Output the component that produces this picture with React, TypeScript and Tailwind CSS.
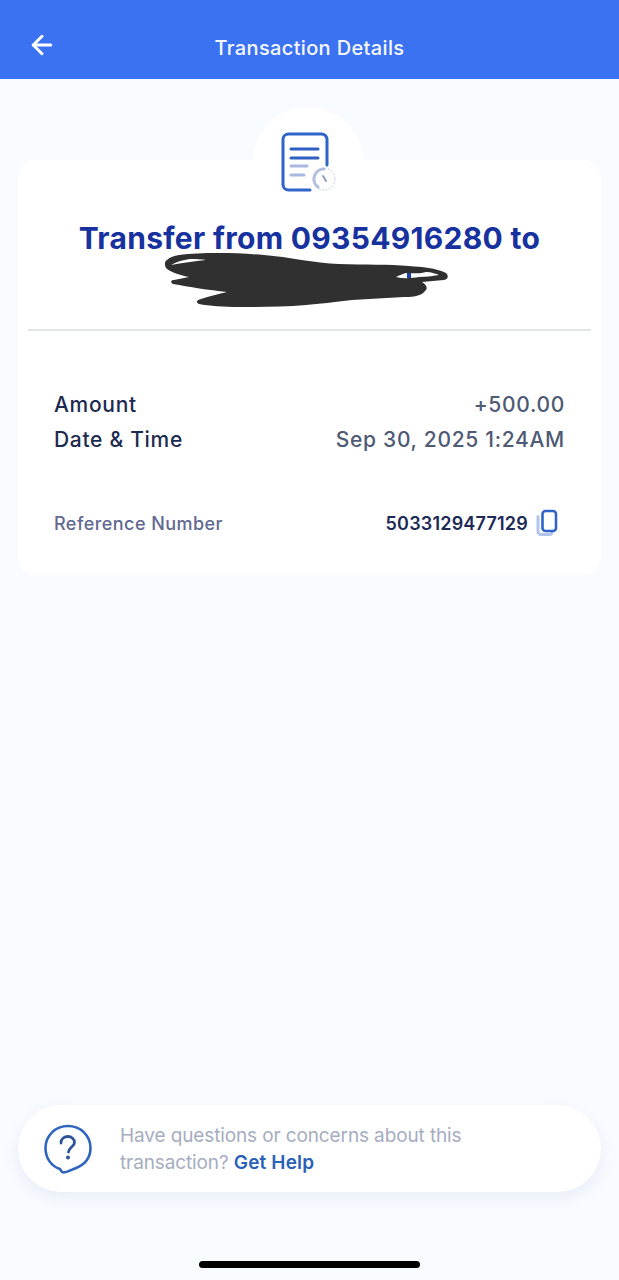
import { ArrowLeft } from "lucide-react";

const font = "font-['Inter','Liberation_Sans',sans-serif]";

const ReceiptIcon = () => (
  <svg width="56" height="62" viewBox="0 0 56 62" fill="none">
    <path
      d="M30 59H8.5A5.5 5.5 0 0 1 3 53.5V8.5A5.5 5.5 0 0 1 8.5 3H41.5A5.5 5.5 0 0 1 47 8.5V34"
      stroke="#2f64c8"
      strokeWidth="3"
      strokeLinecap="round"
    />
    <path d="M11 18H38M11 27H38" stroke="#2f5fc0" strokeWidth="3" strokeLinecap="round" />
    <path d="M11 35H27M11 44H24" stroke="#a9b8e0" strokeWidth="3" strokeLinecap="round" />
    <circle cx="44" cy="48" r="11" stroke="#b5c0dd" strokeWidth="1" strokeDasharray="1.5 2" />
    <path d="M44 38A10 10 0 0 0 38 56" stroke="#b3bfdf" strokeWidth="3" strokeLinecap="round" />
    <path d="M43 45L46 50" stroke="#8d9dc6" strokeWidth="2" strokeLinecap="round" />
  </svg>
);

const Scribble = () => (
  <svg width="284" height="56" viewBox="0 0 284 56" fill="none" className="block">
    <path
      d="M15 3C40 0 75 1 100 3C125 5 150 11 175 12C200 13 225 12 245 14C258 15 272 16 282 21C285 24 284 27 280 28C272 29 265 29 258 30C263 33 264 37 261 39C258 43 252 45 240 45C222 46 205 47 188 48C170 50 155 52 142 53C120 55 95 55 75 55C60 55 45 54 35 52C31 50 33 48 37 47C45 44 55 42 63 40C45 38 25 35 9 32C6 30 7 28 10 28C15 27 20 26 25 25C15 23 6 20 2 16C0 12 1 9 3 8C6 5 10 4 15 3Z"
      fill="#303030"
    />
    <path d="M7 13C12 10 18 8 26 7C32 7 38 7 42 8C30 9 18 11 7 13Z" fill="#ffffff" />
    <path d="M232 25C235 23 239 22 242 21C250 21 256 22 262 20C268 20 272 22 275 23C268 24 262 25 255 25C248 26 240 27 232 25Z" fill="#ffffff" />
    <path d="M243 21H247V26H243Z" fill="#1c3fa8" />
  </svg>
);

const CopyIcon = () => (
  <svg width="24" height="28" viewBox="0 0 24 28" fill="none">
    <path
      d="M3 7.5V22.5A3 3 0 0 0 6 25.5H14.5A3 3 0 0 0 17 24"
      stroke="#b3c3ea"
      strokeWidth="3"
      strokeLinecap="round"
    />
    <rect x="7.5" y="2" width="13.5" height="20" rx="3" stroke="#2f64c8" strokeWidth="2.6" />
  </svg>
);

const HelpIcon = () => (
  <svg width="48" height="50" viewBox="0 0 48 50" fill="none">
    <path
      d="M24 2C36.5 2 46.5 11.5 46.5 24C46.5 34 40 41 31 44.5C26 46.5 22 48.5 19.5 48.5C17.5 48.5 17 46.5 16 45C7 42 1.5 34 1.5 24C1.5 11.5 11.5 2 24 2Z"
      stroke="#2f64c0"
      strokeWidth="2.6"
      strokeLinejoin="round"
    />
    <path
      d="M17 19C17 14.5 20.5 12.5 24 12.5C27.5 12.5 30.5 15 30.5 18.5C30.5 22.5 24.5 23.5 24.5 28"
      stroke="#2f5398"
      strokeWidth="2.8"
      strokeLinecap="round"
    />
    <circle cx="24" cy="33.5" r="2" fill="#2f5398" />
  </svg>
);

export default function App() {
  return (
    <div className={`${font} flex h-[1280px] w-[619px] flex-col overflow-hidden bg-[#f8fbff]`}>
      <header className="relative flex h-[79px] shrink-0 items-center justify-center bg-[#3b72f2] pt-[17px]">
        <ArrowLeft className="absolute left-[27px] top-[30px] text-white" size={30} strokeWidth={2.4} />
        <h1 className="text-[20px] font-medium tracking-[0.35px] text-[#f5f8ff]">Transaction Details</h1>
      </header>

      <section className="relative mx-[18px] mt-[81px] h-[415px] rounded-[18px] bg-white">
        <div className="absolute left-[235px] top-[-53px] h-[110px] w-[110px] rounded-full bg-white" />
        <div className="absolute left-[262px] top-[-29px]">
          <ReceiptIcon />
        </div>
        <div className="relative flex h-[169px] flex-col items-center pt-[60px]">
          <h2 className="text-[30px] font-bold leading-[36px] tracking-[0.3px] text-[#17329f]">
            Transfer from 09354916280 to
          </h2>
          <div className="ml-[-8px] mt-[-4px]">
            <Scribble />
          </div>
        </div>
        <div className="mx-[10px] h-[2px] bg-[#e3e4e6]" />

        <div className="flex flex-col gap-[11px] px-[36px] pt-[62px] text-[21px] leading-[24px] tracking-[0.7px]">
          <div className="flex items-center justify-between">
            <span className="font-medium text-[#1d2a4f]">Amount</span>
            <span className="font-medium text-[#4f5a75]">+500.00</span>
          </div>
          <div className="flex items-center justify-between">
            <span className="font-medium text-[#1d2a4f]">Date &amp; Time</span>
            <span className="font-medium text-[#4f5a75]">Sep 30, 2025 1:24AM</span>
          </div>
        </div>

        <div className="mt-[57px] flex items-center justify-between pl-[36px] pr-[42px]">
          <span className="text-[18px] font-medium tracking-[0.45px] text-[#62688f]">Reference Number</span>
          <div className="flex items-center gap-[7px]">
            <span className="text-[18px] font-semibold tracking-[0.2px] text-[#1d2a55]">5033129477129</span>
            <CopyIcon />
          </div>
        </div>
      </section>

      <section className="mx-[18px] mt-[530px] flex h-[87px] items-center gap-[28px] rounded-full bg-white pl-[26px] shadow-[0_6px_16px_rgba(170,185,215,0.2)]">
        <HelpIcon />
        <p className="pt-[1px] text-[19px] font-normal leading-[27px] tracking-[-0.12px] text-[#a6adbf]">
          Have questions or concerns about this
          <br />
          transaction? <span className="font-semibold tracking-[0.15px] text-[#2a62b8]">Get Help</span>
        </p>
      </section>

      <div className="mx-auto mt-[69px] h-[7px] w-[221px] rounded-full bg-black" />
    </div>
  );
}
